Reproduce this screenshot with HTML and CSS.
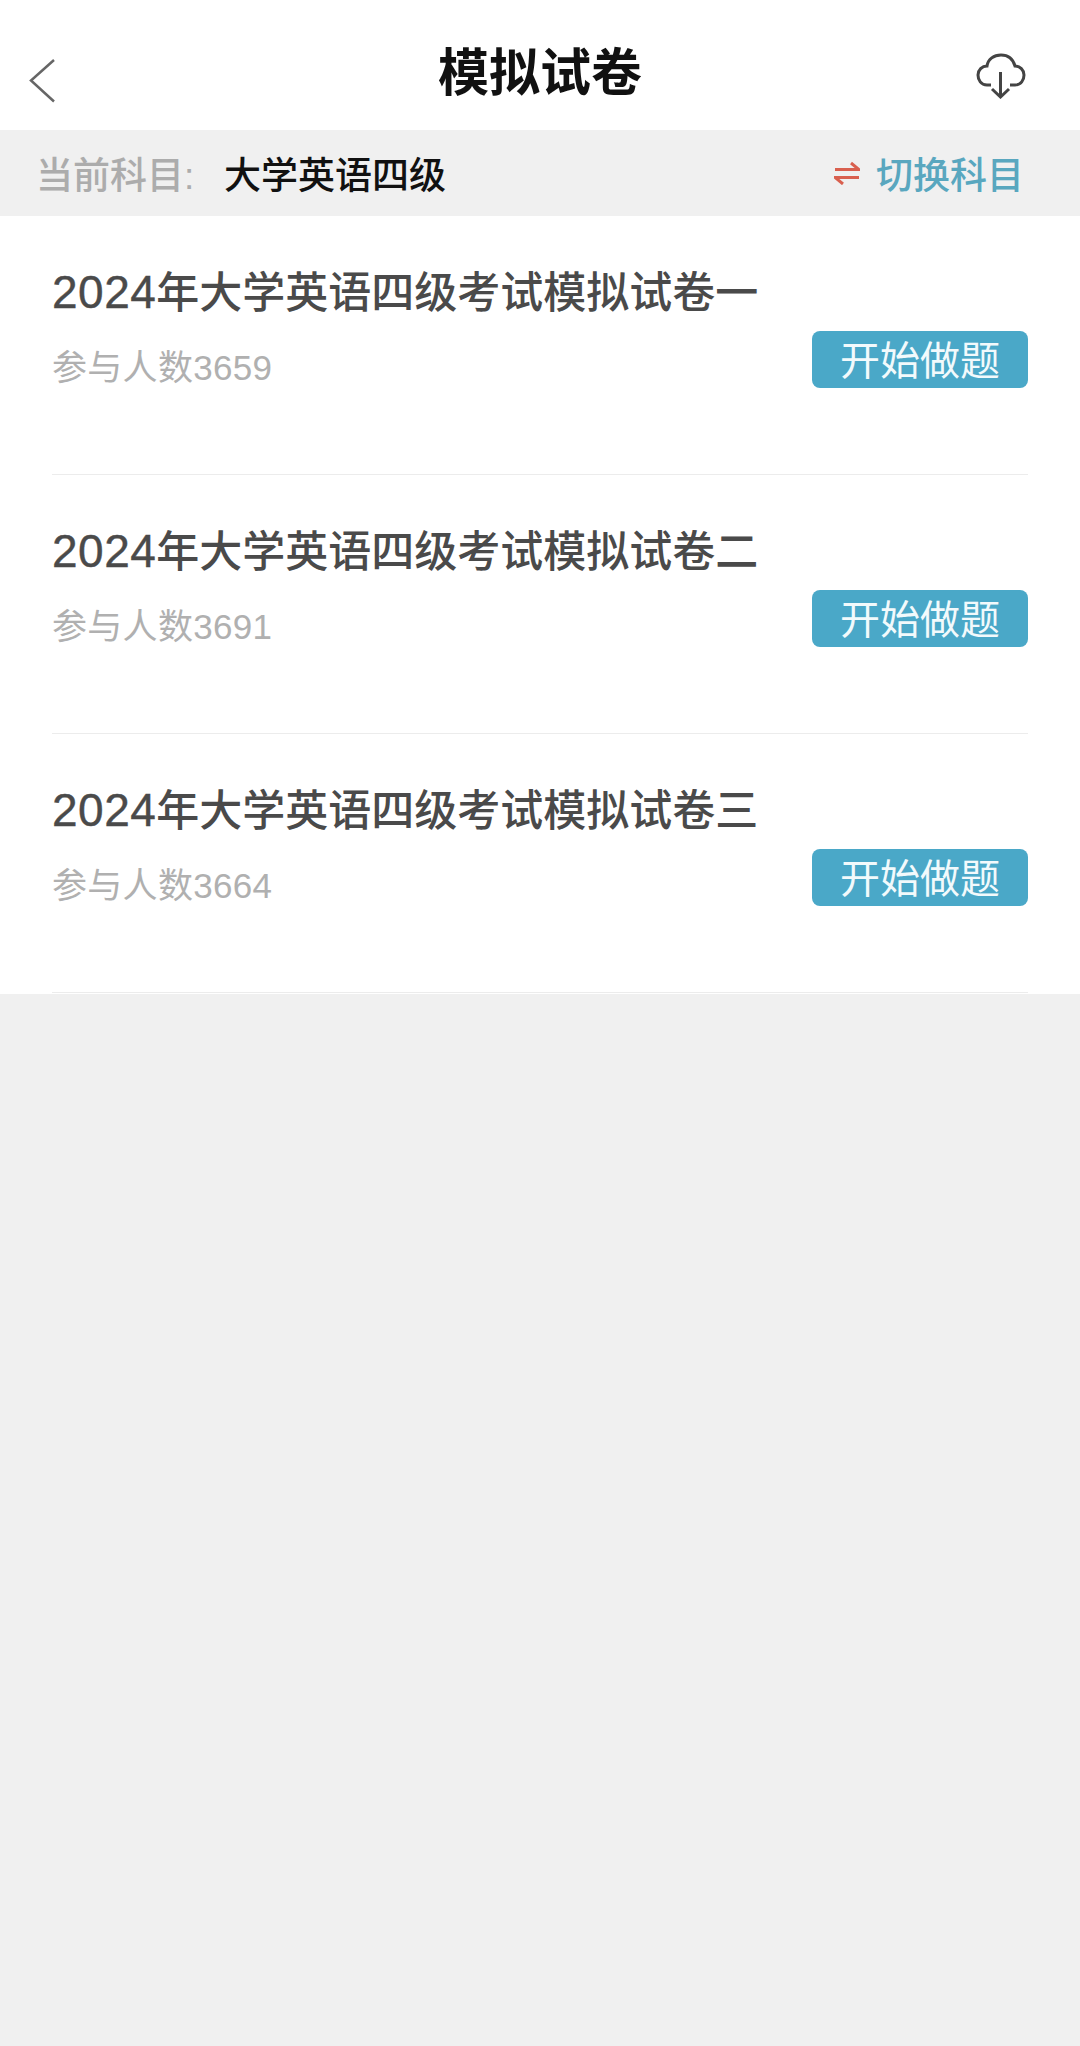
FILE: index.html
```html
<!DOCTYPE html>
<html lang="zh-CN">
<head>
    <meta charset="UTF-8">
    <meta name="viewport" content="width=device-width, initial-scale=1.0">
    <title>模拟试卷</title>
    <link rel="stylesheet" href="styles.css">
</head>
<body>

<!-- Top bar -->
<div class="header">
    <svg class="back" width="30" height="46" viewBox="0 0 30 46">
        <path d="M26 2 L3 22.500 L26 43.500" fill="none" stroke="#666" stroke-width="2.500"/>
    </svg>
    <h1>模拟试卷</h1>
    <svg class="download" width="50" height="46" viewBox="0 0 50 46">
        <path d="M15 32 H11 C5 32 2 27 2 22 C2 17 6 13 11 13 C12 6 18 2 25 2 C32 2 37 6 39 13 C44 13 48 17 48 22 C48 27 45 32 39 32 H34" fill="none" stroke="#444" stroke-width="3"/>
        <path d="M24.500 19 V43 M16 36 L24.500 44 L33 36" fill="none" stroke="#444" stroke-width="3"/>
    </svg>
</div>

<!-- Subject bar -->
<div class="subject">
    <span class="subject-label">当前科目:</span>
    <span class="subject-name">大学英语四级</span>
    <div class="switch">
        <svg width="26" height="24" viewBox="0 0 26 24">
            <path d="M1 8.500 H25 L17 2" fill="none" stroke="#d9604f" stroke-width="3"/>
            <path d="M25 16.500 H1 L9 23" fill="none" stroke="#d9604f" stroke-width="3"/>
        </svg>
        <span>切换科目</span>
    </div>
</div>

<!-- Paper list -->
<div class="list">
    <div class="paper">
        <div class="paper-title"><span class="year">2024</span>年大学英语四级考试模拟试卷一</div>
        <div class="paper-row">
            <span class="paper-count">参与人数3659</span>
            <div class="start">开始做题</div>
        </div>
    </div>
    <div class="paper">
        <div class="paper-title"><span class="year">2024</span>年大学英语四级考试模拟试卷二</div>
        <div class="paper-row">
            <span class="paper-count">参与人数3691</span>
            <div class="start">开始做题</div>
        </div>
    </div>
    <div class="paper">
        <div class="paper-title"><span class="year">2024</span>年大学英语四级考试模拟试卷三</div>
        <div class="paper-row">
            <span class="paper-count">参与人数3664</span>
            <div class="start">开始做题</div>
        </div>
    </div>
</div>

</body>
</html>
```

FILE: styles.css
```css
body {
    font-family: "Liberation Sans", "Noto Sans CJK SC", sans-serif;
    background-color: #f0f0f0;
    color: #333;
    margin: 0;
}

.header {
    height: 130px;
    background-color: white;
    display: grid;
    grid-template-columns: 1fr auto 1fr;
    align-items: center;
    padding: 0 28px;
}

.header h1 {
    margin: 9px 0 0;
    font-size: 51px;
    font-weight: 700;
    line-height: 130px;
    color: #111;
}

.back {
    margin-top: 23px;
}

.download {
    margin: 12px 26px 0 0;
    justify-self: end;
}

.subject {
    height: 86px;
    display: flex;
    align-items: center;
    padding: 0 56px 0 36px;
    box-sizing: border-box;
    font-size: 37px;
    font-weight: 500;
}

.subject-label {
    color: #acacac;
    width: 188px;
}

.subject-name {
    color: #111;
}

.switch {
    margin-left: auto;
    display: flex;
    align-items: center;
    gap: 16px;
    color: #59a7bf;
}

.list {
    background-color: white;
    height: 778px;
    padding: 0 52px;
}

.paper {
    height: 259px;
    box-sizing: border-box;
    border-bottom: 1px solid #ececec;
    padding-top: 43px;
}

.paper-title {
    font-size: 43px;
    font-weight: 500;
    line-height: 68px;
    color: #4a4a4a;
}

.year {
    font-size: 46px;
    letter-spacing: 0.5px;
    line-height: 1;
    -webkit-text-stroke: 0.4px #4a4a4a;
}

.paper-row {
    display: flex;
    justify-content: space-between;
    align-items: flex-start;
}

.paper-count {
    font-size: 35px;
    letter-spacing: 0.3px;
    line-height: 50px;
    color: #b0b0b0;
    margin-top: 16px;
}

.start {
    width: 216px;
    height: 57px;
    line-height: 60px;
    margin-top: 4px;
    background-color: #4aa8c8;
    border-radius: 8px;
    color: #f2fafc;
    font-size: 40px;
    text-align: center;
}
```
